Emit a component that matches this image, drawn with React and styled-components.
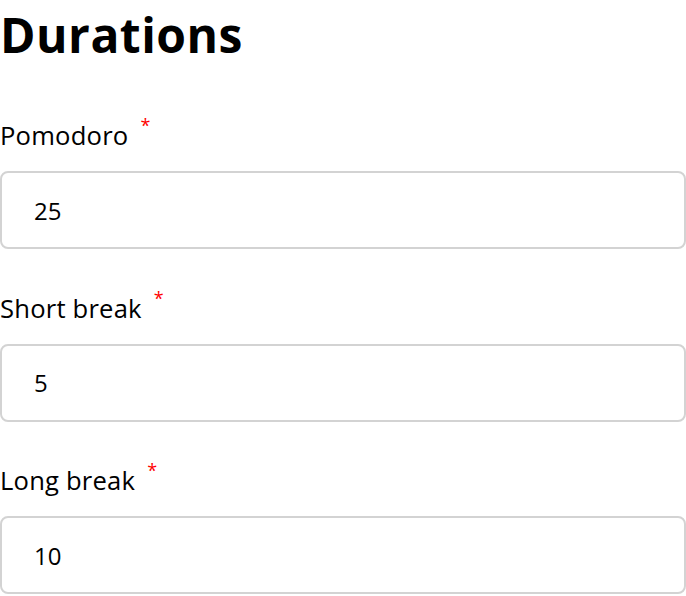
import React from "react";
import styled, { createGlobalStyle } from "styled-components";

const Global = createGlobalStyle`
  html, body { margin: 0; padding: 0; background: #fff; }
  body { font-family: "Open Sans", Lato, sans-serif; color: #000; }
  * { box-sizing: border-box; }
`;

const Page = styled.div`
  width: 686px;
  display: flex;
  flex-direction: column;
`;

const Title = styled.h1`
  margin: 0 0 56px;
  padding-top: 6px;
  font-size: 48px;
  font-weight: 700;
  line-height: 58px;
  letter-spacing: 0.5px;
`;

const Fields = styled.div`
  display: flex;
  flex-direction: column;
  gap: 43.5px;
`;

const Field = styled.label`
  display: flex;
  flex-direction: column;
  gap: 19px;
`;

const LabelText = styled.span`
  font-size: 25.6px;
  line-height: 32px;
  letter-spacing: 0.2px;
  display: flex;
  align-items: flex-start;
`;

const Required = styled.span`
  color: #f00;
  font-size: 18px;
  line-height: 18px;
  margin-left: 12px;
  margin-top: -4px;
`;

const Input = styled.input`
  display: block;
  width: 100%;
  height: 78px;
  margin: 0;
  border: 2px solid #d3d3d3;
  border-radius: 8px;
  padding: 0 32px;
  font-family: inherit;
  font-size: 24px;
  color: #000;
  background: #fff;
  outline: none;
`;

const fields = [
  { label: "Pomodoro", value: "25" },
  { label: "Short break", value: "5" },
  { label: "Long break", value: "10" },
];

export default function App() {
  return (
    <Page>
      <Global />
      <Title>Durations</Title>
      <Fields>
        {fields.map((f) => (
          <Field key={f.label}>
            <LabelText>
              {f.label}
              <Required>*</Required>
            </LabelText>
            <Input type="text" defaultValue={f.value} readOnly />
          </Field>
        ))}
      </Fields>
    </Page>
  );
}
